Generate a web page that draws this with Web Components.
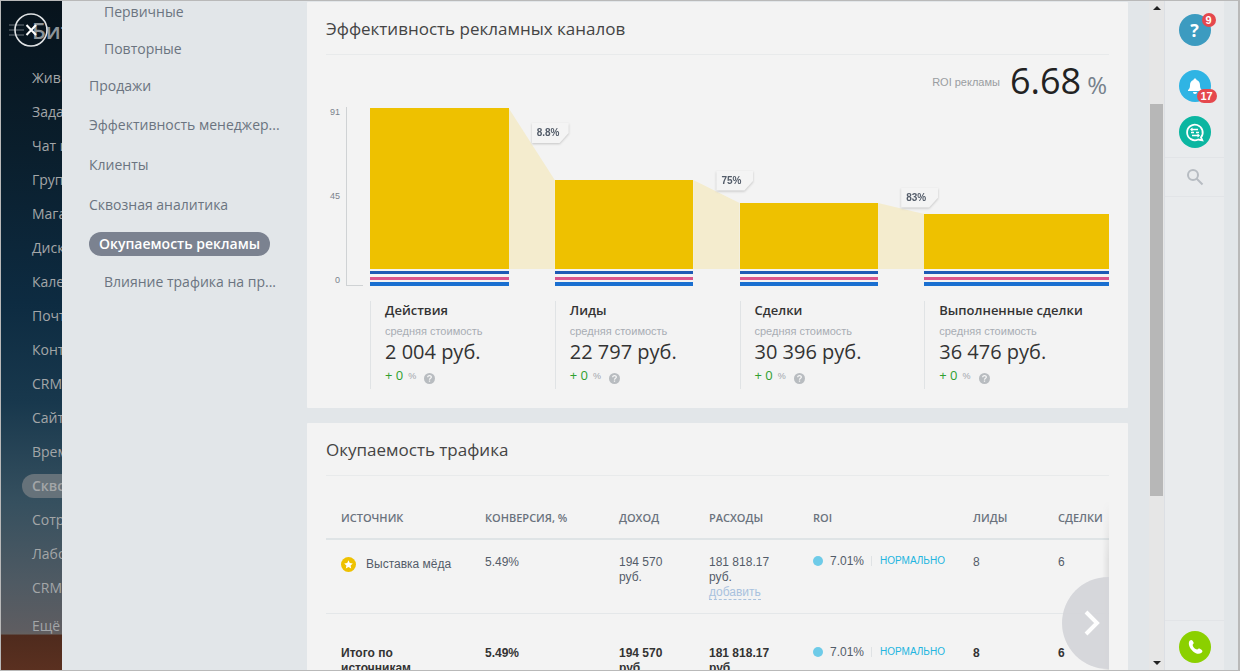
<!DOCTYPE html>
<html lang="ru">
<head>
<meta charset="utf-8">
<title>Окупаемость рекламы</title>
<style>
html, body { height: 100%; margin: 0; }
body { font-family: "Open Sans", sans-serif; color: #535c69; background: #e1e5e9; overflow: hidden; }
</style>
</head>
<body>
<app-shell>
  <main-rail slot="rail"></main-rail>
  <report-nav slot="nav"></report-nav>
  <report-card heading="Эффективность рекламных каналов">
    <roi-total label="ROI рекламы" value="6.68"></roi-total>
    <funnel-chart></funnel-chart>
  </report-card>
  <report-card heading="Окупаемость трафика">
    <traffic-table></traffic-table>
  </report-card>
  <scroll-track slot="scroll"></scroll-track>
  <quick-bar slot="quick"></quick-bar>
</app-shell>

<script>
const define = (name, html, setup) => {
  const template = document.createElement('template');
  template.innerHTML = html;
  customElements.define(name, class extends HTMLElement {
    constructor() {
      super();
      this.attachShadow({ mode: 'open' }).append(template.content.cloneNode(true));
    }
    connectedCallback() { if (setup) setup(this, this.shadowRoot); }
  });
};

define('app-shell', `
<style>
:host { display: flex; box-sizing: border-box; height: 100vh; border: 1px solid #b9b9b9; border-right-width: 2px; overflow: hidden; background: #e2e6e9; }
main { flex: 1; min-width: 0; display: flex; flex-direction: column; gap: 15px; overflow: hidden; margin-right: 21px; padding-top: 1px; }
</style>
<slot name="rail"></slot><slot name="nav"></slot>
<main><slot></slot></main>
<slot name="scroll"></slot><slot name="quick"></slot>`);

define('main-rail', `
<style>
:host { display: block; flex: none; width: 61px; overflow: hidden; position: relative; color: #a3a6a8;
  background: linear-gradient(#07131c 0, #0a1e2c 22%, #0d2b41 45%, #18384d 60%, #36505f 75%, #4f5a63 87%, #5e5d61 94%, #64605f 94.6%, #4f2b1d 94.8%, #5a3020 100%); }
.top { display: flex; align-items: center; height: 58px; margin-bottom: 2px; }
.bars { width: 18px; height: 12px; margin-left: 8px; opacity: .5; flex: none; }
.logo { font-size: 22px; line-height: 30px; font-weight: 600; margin-left: 5px; color: #8c9499; white-space: nowrap; }
button { position: absolute; left: 13px; top: 12px; width: 34px; height: 34px; padding: 0; border: 0; background: none; }
button svg { display: block; }
ul { list-style: none; margin: 0; padding: 0; }
li { height: 34px; display: flex; align-items: center; }
a { color: inherit; text-decoration: none; font-size: 14px; line-height: 24px; padding-left: 10px; margin-left: 21px; flex: 1; white-space: nowrap; }
a[aria-current] { background: #66727a; border-radius: 12px 0 0 12px; font-weight: 600; }
li.more { margin-top: 4px; }
</style>
<div class="top">
  <svg class="bars" viewBox="0 0 18 12" stroke="#8c9499" stroke-width="1.5"><path d="M0 1h15M0 6h15M0 11h15"/></svg>
  <span class="logo">Бит</span>
</div>
<button type="button" aria-label="Закрыть"><svg width="34" height="34" viewBox="0 0 34 34" fill="none" stroke="#dfe2e4"><circle cx="17" cy="17" r="16" stroke-width="1.6"/><path d="M12.500 12l9.500 10M22 12l-9.500 10" stroke="#fff" stroke-width="2"/></svg></button>
<ul></ul>`, (el, root) => {
  const items = ['Жив', 'Зада', 'Чат и', 'Груп', 'Мага', 'Диск', 'Кале', 'Почт', 'Конт', 'CRM', 'Сайт', 'Врем', 'Скво', 'Сотр', 'Лабо', 'CRM', 'Ещё'];
  root.querySelector('ul').innerHTML = items.map((t, i) =>
    `<li${i === 16 ? ' class="more"' : ''}><a href="#"${i === 12 ? ' aria-current="page"' : ''}>${t}</a></li>`).join('');
});

define('report-nav', `
<style>
:host { display: block; flex: none; box-sizing: border-box; width: 245px; padding-left: 27px; background: #e2e6e9; }
ul { list-style: none; margin: 0; padding: 0; }
li { height: 40px; display: flex; align-items: center; }
li.sub { height: 37px; padding-left: 15px; }
li.short { height: 38px; }
li.first { height: 22px; padding-bottom: 7px; }
a { font-size: 14px; line-height: 24px; color: #6b7480; text-decoration: none; white-space: nowrap; }
a[aria-current] { background: #7b8290; color: #fff; font-weight: 600; border-radius: 12px; padding: 0 10px; }
</style>
<nav><ul>
<li class="sub first"><a href="#">Первичные</a></li>
<li class="sub"><a href="#">Повторные</a></li>
<li class="short"><a href="#">Продажи</a></li>
<li><a href="#">Эффективность менеджер...</a></li>
<li><a href="#">Клиенты</a></li>
<li><a href="#">Сквозная аналитика</a></li>
<li class="short"><a href="#" aria-current="page">Окупаемость рекламы</a></li>
<li class="sub"><a href="#">Влияние трафика на пр...</a></li>
</ul></nav>`);

define('report-card', `
<style>
:host { display: block; flex: none; background: #f3f3f3; padding: 0 19px; border-radius: 1px; }
h2 { margin: 0; font-size: 17px; line-height: 26px; font-weight: 400; color: #444; padding: 14px 0 12px; border-bottom: 1px solid #e8eaeb; }
</style>
<h2></h2><slot></slot>`, (el, root) => {
  root.querySelector('h2').textContent = el.getAttribute('heading');
});

define('roi-total', `
<style>
:host { display: flex; justify-content: flex-end; align-items: center; height: 53px; }
.label { font: 11px/16px "Liberation Sans", sans-serif; color: #9a9da1; margin-right: 10px; }
.figure { line-height: 47px; padding-top: 6px; white-space: nowrap; }
.value { font-size: 36px; color: #222; }
.unit { font-size: 24px; color: #76818c; margin: 0 2px 0 6px; }
</style>
<span class="label"></span><span class="figure"><span class="value"></span><span class="unit">%</span></span>`, (el, root) => {
  root.querySelector('.label').textContent = el.getAttribute('label');
  root.querySelector('.value').textContent = el.getAttribute('value');
});

define('funnel-step', `
<style>
:host { display: block; }
.plot { display: grid; grid-template-columns: 3fr 1fr; align-items: end; height: 178px; }
.fill { background: #eec100; height: var(--h); margin-bottom: 2px; }
.s { height: 3px; }
.s1 { background: #1d5ab5; margin-bottom: 3px; }
.s2 { background: #d9558c; margin-bottom: 2px; }
.s3 { background: #1a6fd0; height: 4px; }
.link { position: relative; height: var(--h); margin-bottom: 17px; }
.shade { height: 100%; background: #f4ecce; clip-path: polygon(0 0, 100% calc(var(--h) - var(--next)), 100% 100%, 0 100%); }
.tag { position: absolute; left: 50%; top: calc((var(--h) - var(--next)) / 2 - 1px); transform: translateY(-100%); filter: drop-shadow(0 1px 1px #c4c4c4); }
.tag span { display: block; box-sizing: border-box; width: 37px; padding-left: 5px; font: 700 10px/20px "Liberation Sans", sans-serif; color: #535c69; background: #f4f4f4; clip-path: polygon(0 0, 37px 0, 37px 10px, 28px 100%, 0 100%); }
:host([last]) .plot { grid-template-columns: 1fr; }
:host([last]) .link { display: none; }
.info { margin: 15px 0 19px; padding-left: 14px; height: 88px; border-left: 1px solid #e0e3e5; white-space: nowrap; }
h3 { margin: 0; font-size: 13px; line-height: 18px; font-weight: 600; color: #333; }
.note { font: 11px/16px "Liberation Sans", sans-serif; color: #a8adb4; padding-top: 4px; }
.cost { font-size: 20px; line-height: 26px; color: #333; }
.delta { display: flex; align-items: center; font-size: 13px; line-height: 18px; color: #2fa02f; }
.delta small { font: 9px/18px "Liberation Sans", sans-serif; color: #a0a5ab; margin: 2px 8px 0 5px; }
.delta svg { margin-top: 6px; }
</style>
<div class="plot">
  <div><div class="fill"></div><div class="s s1"></div><div class="s s2"></div><div class="s s3"></div></div>
  <div class="link"><div class="shade"></div><div class="tag"><span></span></div></div>
</div>
<div class="info">
  <h3></h3><div class="note">средняя стоимость</div><div class="cost"></div>
  <div class="delta">+ 0<small>%</small><svg width="11" height="11" viewBox="0 0 11 11"><circle cx="5.500" cy="5.500" r="5.500" fill="#b8bcc0"/><path d="M3.700 4.300C3.700 2 7.400 2.200 7.300 4.200C7.200 5.300 5.500 5.200 5.500 6.700M5.500 7.600V8.800" fill="none" stroke="#f6f6f6" stroke-width="1.300"/></svg></div>
</div>`, (el, root) => {
  root.querySelector('h3').textContent = el.getAttribute('heading');
  root.querySelector('.cost').textContent = el.getAttribute('cost');
  root.querySelector('.tag span').textContent = el.getAttribute('rate') || '';
});

define('funnel-chart', `
<style>
:host { display: flex; }
.axis { display: flex; flex-direction: column; justify-content: space-between; width: 14px; height: 178px; margin-top: -1px; font: 9px/10px "Liberation Sans", sans-serif; color: #7a828c; text-align: right; }
.line { width: 16px; height: 178px; margin: -1px 7px 0 6px; border: solid #cfd2d4; border-width: 0 0 1px 1px; }
.steps { flex: 1; display: grid; grid-template-columns: repeat(4, 1fr); }
</style>
<div class="axis"><span>91</span><span>45</span><span>0</span></div>
<div class="line"></div>
<div class="steps">
<funnel-step heading="Действия" cost="2 004 руб." rate="8.8%" style="--h:161px;--next:89px"></funnel-step>
<funnel-step heading="Лиды" cost="22 797 руб." rate="75%" style="--h:89px;--next:66px"></funnel-step>
<funnel-step heading="Сделки" cost="30 396 руб." rate="83%" style="--h:66px;--next:55px"></funnel-step>
<funnel-step last heading="Выполненные сделки" cost="36 476 руб." style="--h:55px;--next:55px"></funnel-step>
</div>`);

define('traffic-table', `
<style>
:host { display: block; position: relative; overflow: hidden; padding-top: 24px; }
table { width: 100%; table-layout: fixed; border-collapse: collapse; font: 12px/15px "Liberation Sans", sans-serif; color: #535c69; }
th, td { text-align: left; vertical-align: top; padding: 0 0 0 15px; font-weight: inherit; }
thead th { font: 600 11px/16px "Open Sans", sans-serif; text-transform: uppercase; white-space: nowrap; padding-top: 10px; padding-bottom: 12px; color: #6a727d; border-bottom: 2px solid #dfe4e6; }
tbody td { padding-top: 15px; height: 58px; border-bottom: 1px solid #e4e7e9; }
tfoot td { padding-top: 32px; height: 58px; font-weight: 700; color: #333; }
.src { display: flex; align-items: center; gap: 10px; height: 18px; white-space: nowrap; }
a { color: #a9c2de; border-bottom: 1px dashed #a9c2de; text-decoration: none; display: inline-block; line-height: 14px; }
.roi { display: flex; align-items: center; height: 12px; font-weight: 400; color: #535c69; }
.roi i { width: 10px; height: 10px; border-radius: 50%; background: #6ecbe8; margin-right: 7px; }
.roi b { font-weight: 400; font-size: 10px; color: #22b5e0; padding-left: 8px; margin-left: 7px; line-height: 10px; border-left: 1px solid #dfe2e4; }
button { position: absolute; right: -45px; top: 101px; width: 92px; height: 92px; border-radius: 50%; border: 0; padding: 0; background: #d5d6da; opacity: .95; }
button svg { display: block; margin-left: 20px; }
.edge { position: absolute; right: 0; top: 24px; bottom: 0; width: 7px; background: linear-gradient(90deg, transparent, rgba(0,0,0,.08)); -webkit-mask: linear-gradient(transparent, #000 60px); mask: linear-gradient(transparent, #000 60px); }
</style>
<table>
<colgroup><col style="width:144px"><col style="width:134px"><col style="width:90px"><col style="width:104px"><col style="width:160px"><col style="width:85px"><col></colgroup>
<thead><tr><th scope="col">Источник</th><th scope="col">Конверсия, %</th><th scope="col">Доход</th><th scope="col">Расходы</th><th scope="col">ROI</th><th scope="col">Лиды</th><th scope="col">Сделки</th></tr></thead>
<tbody><tr>
<td><span class="src"><svg width="15" height="15" viewBox="0 0 15 15"><circle cx="7.500" cy="7.500" r="7.500" fill="#eec100"/><path d="M7.500 3.300l1.300 2.700 3 .4-2.200 2 .6 3-2.700-1.500-2.700 1.500.6-3-2.200-2 3-.4z" fill="#fff"/></svg>Выставка мёда</span></td>
<td>5.49%</td><td>194 570<br>руб.</td><td>181 818.17<br>руб.<br><a href="#">добавить</a></td>
<td><span class="roi"><i></i>7.01%<b>НОРМАЛЬНО</b></span></td><td>8</td><td>6</td>
</tr></tbody>
<tfoot><tr>
<td>Итого по<br>источникам</td><td>5.49%</td><td>194 570<br>руб.</td><td>181 818.17<br>руб.</td>
<td><span class="roi"><i></i>7.01%<b>НОРМАЛЬНО</b></span></td><td>8</td><td>6</td>
</tr></tfoot>
</table>
<div class="edge"></div>
<button type="button" aria-label="Прокрутить вправо"><svg width="20" height="28" viewBox="0 0 20 28" fill="none" stroke="#fff" stroke-width="4"><path d="M4 3l11 11L4 25"/></svg></button>`);

define('scroll-track', `
<style>
:host { display: flex; flex-direction: column; align-items: center; flex: none; width: 15px; background: #e6e6e6; }
.thumb { width: 13px; height: 392px; background: #b7b7b7; margin-top: 94px; }
.up, .down { border: 4px solid transparent; }
.up { border-top: 0; border-bottom: 4px solid #222; margin-top: 5px; }
.down { border-bottom: 0; border-top: 4px solid #222; margin-top: auto; margin-bottom: 5px; }
</style>
<div class="up"></div><div class="thumb"></div><div class="down"></div>`);

define('quick-bar', `
<style>
:host { display: flex; flex-direction: column; align-items: center; flex: none; box-sizing: border-box; width: 60px; margin-right: 14px; background: #e9ebed; border-left: 1px solid #dcdfe4; padding-top: 13px; }
button { position: relative; flex: none; width: 32px; height: 32px; border: 0; padding: 0; border-radius: 50%; font: 700 18px/32px "Open Sans", sans-serif; color: #fff; }
button svg { display: block; }
.help { background: #3c9bc0; }
.bell { background: #2fb4e4; margin-top: 24px; }
.chat { background: #0bb6a1; margin-top: 14px; }
.badge { position: absolute; background: #e5484d; color: #fff; font: 700 11px/14px "Liberation Sans", sans-serif; border-radius: 7px; text-align: center; }
.help .badge { width: 14px; right: -5px; top: -1px; }
.bell .badge { width: 20px; right: -6px; bottom: -1px; }
.row { width: 100%; display: flex; justify-content: center; border: solid #e2e4e7; }
.search { height: 38px; align-items: center; border-width: 1px 0; margin-top: 9px; }
.search button { background: none; width: 18px; height: 18px; border-radius: 0; }
.call { margin-top: auto; padding: 10px 0 7px; border-width: 1px 0 0; }
.call button { background: #8bd000; }
</style>
<button class="help" type="button">?<span class="badge">9</span></button>
<button class="bell" type="button" aria-label="Уведомления"><svg width="32" height="32" viewBox="0 0 32 32" fill="#fff"><path d="M16 8.500c.9 0 1.500.6 1.500 1.400 2.500.8 3.500 2.700 3.500 5.300 0 2.600.7 3.800 2 4.800v1H9v-1c1.300-1 2-2.200 2-4.800 0-2.600 1-4.500 3.500-5.300 0-.8.6-1.400 1.500-1.400zM14 22h4c0 1.200-.9 2-2 2s-2-.8-2-2z"/></svg><span class="badge">17</span></button>
<button class="chat" type="button" aria-label="Чат"><svg width="32" height="32" viewBox="0 0 32 32" fill="none" stroke="#fff"><path stroke-width="1.800" d="M22 21.300A7.800 7.800 0 1 0 19.200 23.500L23.300 24.300Z"/><path stroke-width="1.400" d="M12 13.500h7M12 16.500h3M17 16.500h3M13 19.500h7"/><path fill="#fff" stroke="none" d="M11 13.500l2.500-2v4zM21 19.500l-2.500-2v4z"/></svg></button>
<div class="row search"><button type="button" aria-label="Поиск"><svg width="18" height="18" viewBox="0 0 18 18" fill="none" stroke="#b7bcc2" stroke-width="2"><circle cx="7" cy="7" r="5"/><path d="M10.500 10.500l6 6"/></svg></button></div>
<div class="row call"><button type="button" aria-label="Позвонить"><svg width="32" height="32" viewBox="0 0 32 32" fill="#fff"><path d="M10.600 9.800c1.200-1.300 2.300-1 3 0l1 1.800c.4 1-.6 1.600-1 2.300.2 2 2.400 4.200 4.500 4.600.9-.4 1.400-1.400 2.400-1l2 1.200c1.200.8 1.300 1.900 0 3-2 1.700-5 1.700-8.400-1.200C10.300 17 8.800 12.200 10.600 9.800z"/></svg></button></div>`);
</script>
</body>
</html>
